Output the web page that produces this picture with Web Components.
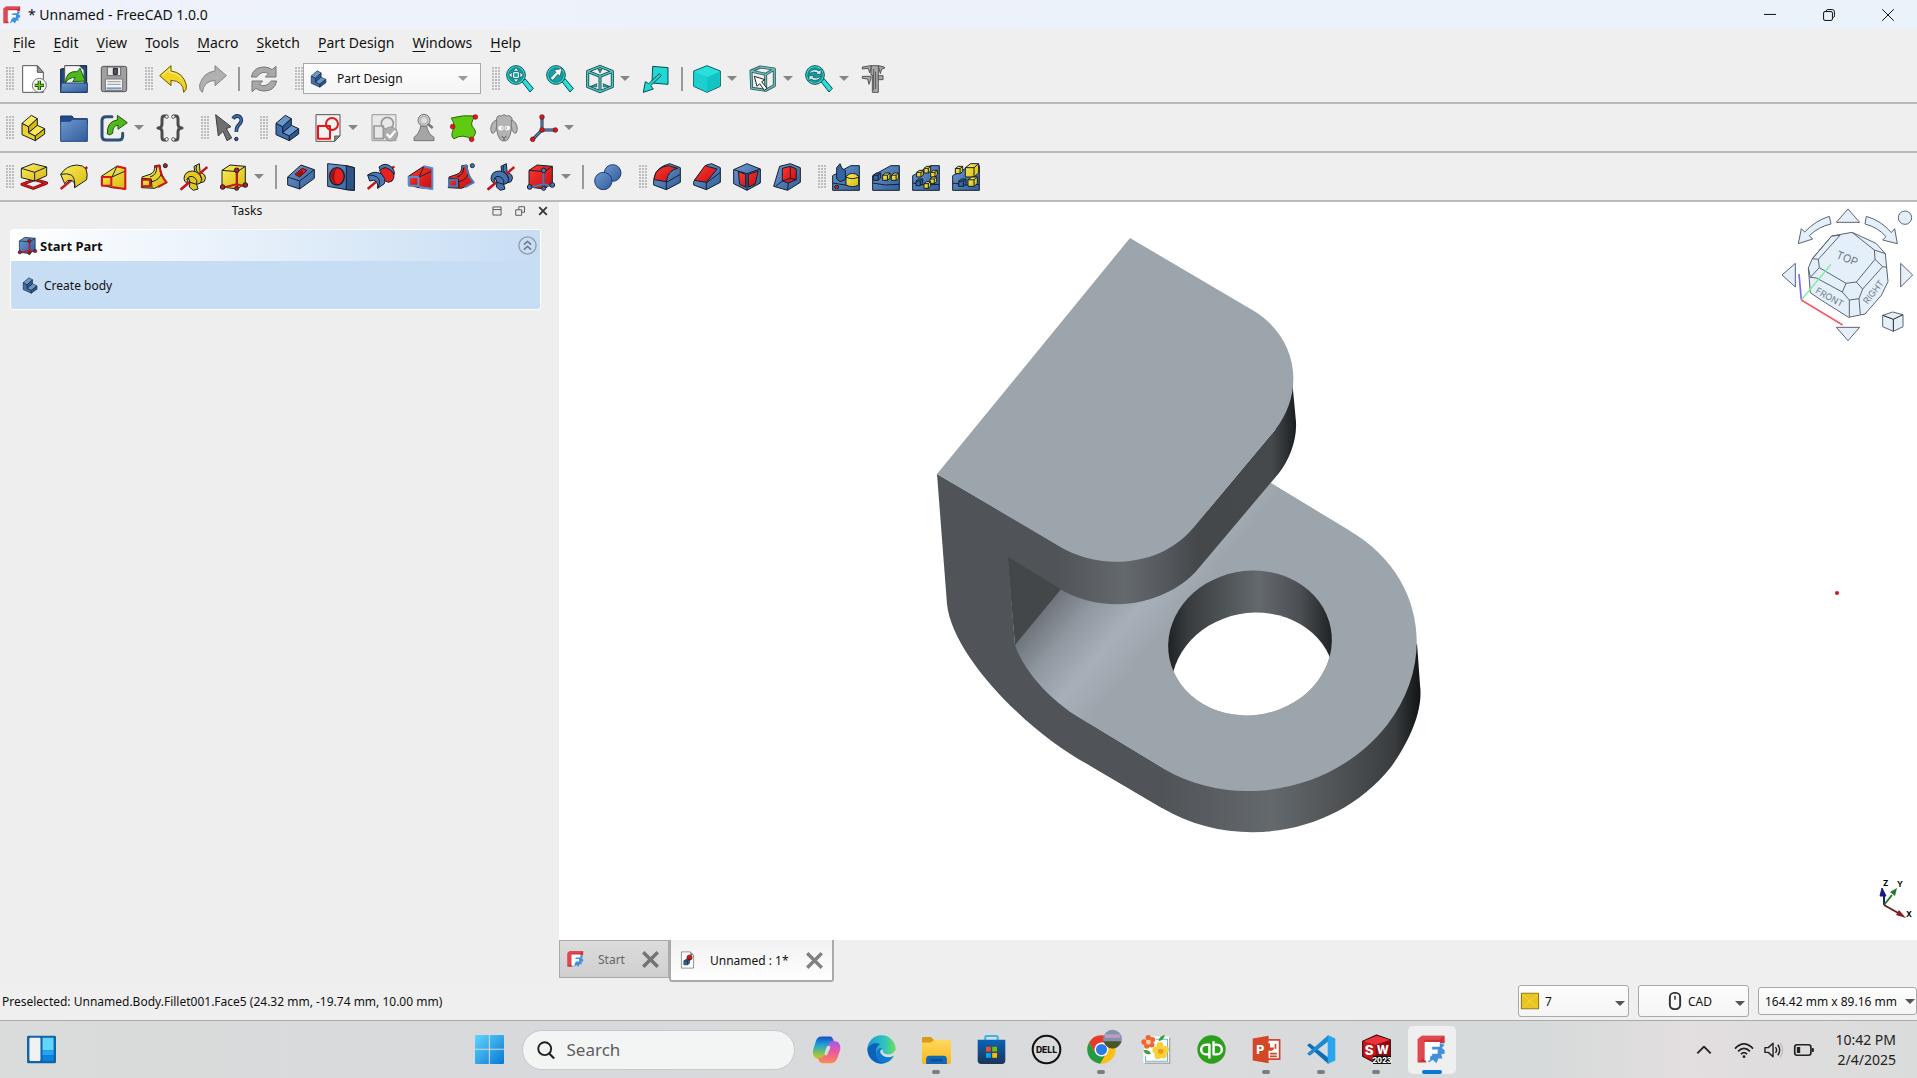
<!DOCTYPE html>
<html lang="en">
<head>
<meta charset="utf-8">
<title>* Unnamed - FreeCAD 1.0.0</title>
<style>
  html, body { height: 100%; margin: 0; }
  body {
    font-family: "Noto Sans", "Open Sans", sans-serif;
    font-size: 12px;
    color: #111;
    background: #efefef;
    overflow: hidden;
  }
</style>
</head>
<body>
<cad-app></cad-app>

<script>
// Every icon is drawn on an 84 x 84 grid
const STEP = (top, front, side) => `
  <path fill="${front}" d="M6 28 26 38V56L46 66V80L6 62z"/>
  <path fill="${top}" d="M6 28 34 4 52 14 26 38z"/>
  <path fill="${side}" d="M26 38 52 14V34L26 56z"/>
  <path fill="${top}" d="M26 56 52 34 74 44 46 66z"/>
  <path fill="${side}" d="M46 66 74 44V60L46 80z"/>`;

const PATTERN_BASE = '<path fill="url(#b)" d="M2 82V38L56 8 82 8V82z"/><path fill="none" d="M2 60 40 66 82 64"/>';
const cube = (x, y, s, fill) => `
  <path fill="${fill}" d="M${x} ${y + s * 0.3}L${x + s * 0.4} ${y}H${x + s}V${y + s * 0.7}L${x + s * 0.65} ${y + s}H${x}z"/>
  <path fill="none" d="M${x} ${y + s * 0.3}H${x + s * 0.65}V${y + s}M${x + s * 0.65} ${y + s * 0.3}L${x + s} ${y}"/>`;

const LENS = `
  <path d="M48 50 58 42 82 70 72 81z" fill="#2adfdc" stroke="#0b4a4d"/>
  <circle cx="30" cy="30" r="28" fill="#2fe0dc" stroke="#0b4a4d"/>
  <circle cx="30" cy="30" r="22" fill="#169fa4" stroke="#0b6b6e" stroke-width="2"/>`;

const wedge = (a, e) => `
  <path fill="${a}" d="M4 40 50 10 76 16 76 78 36 74 4 66z"/>
  <path fill="none" stroke="#222" d="M36 42 50 12M36 42 76 24"/>
  <path fill="none" stroke="${e}" stroke-width="6" d="M50 10 76 16V78L36 72"/>
  <rect x="6" y="42" width="28" height="26" fill="${a}" stroke="${e}" stroke-width="6"/>`;

const sweep = (a, e) => `
  <path fill="${a}" d="M6 42 30 34Q46 28 44 8L60 6Q62 38 80 58L44 76 4 74z"/>
  <path fill="none" d="M30 42Q52 36 50 10M36 56Q60 50 64 30M36 74 34 48 6 46"/>
  <path fill="none" stroke="${e}" stroke-width="6" d="M44 12 58 8Q62 40 80 58L54 72"/>
  <rect x="6" y="50" width="24" height="20" fill="${a}" stroke="${e}" stroke-width="6"/>
  <circle cx="76" cy="8" r="6" fill="${e}"/>`;

// Coil around a slanted axis: back loop, axis, then front loop
const helix = (a) => `
  <path fill="${a}" d="M42 10 58 2 60 26 74 36Q80 46 72 56L54 62 46 40z"/>
  <path fill="none" d="M50 8Q44 24 60 34L66 50"/>
  <path stroke="#c4181b" stroke-width="7" d="M2 80 82 12"/>
  <path fill="${a}" d="M12 46Q14 24 38 24 58 26 64 46 66 62 50 64L54 78 40 82 28 72 30 58 26 46 20 60Q12 56 12 46z"/>
  <path fill="none" d="M20 50Q28 34 44 44 54 52 50 64M30 58 50 64"/>
  <path stroke="#c4181b" stroke-width="7" d="M2 80 24 61"/>`;

const primitive = (a, e) => `
  <path fill="${a}" d="M6 22 30 6 76 10 76 60 52 78 6 72z"/>
  <path fill="none" d="M6 22 52 26 76 10M52 26V78"/>
  <path fill="none" stroke="${e}" stroke-width="6" d="M50 24V64L8 74M50 64 74 70"/>
  <g fill="${e}"><circle cx="50" cy="22" r="7"/><circle cx="8" cy="72" r="7"/><circle cx="76" cy="66" r="7"/><circle cx="50" cy="76" r="6"/></g>`;

const FREECAD = `
  <g stroke="none"><path fill="#cb333b" d="M2 12 14 2H80V24H26V80H2z"/><path fill="#f0555d" d="M14 2H80L66 14H20V66L2 80V12z" opacity=".6"/>
  <path fill="#418fde" d="M44 30 66 24 80 28 72 38 80 44 80 54 70 56 74 68 62 68 56 82 46 72 34 80 30 66 44 60z"/>
  <path fill="#fff" d="M22 20H66V34H38V42H60V54H38V74H22z"/></g>`;

const ICONS = {
  'freecad': FREECAD,
  'new': `<path fill="#fff" stroke="#555" d="M8 2H52L70 22V82H8z"/><path fill="#999" stroke="#555" d="M52 2V22H70z"/>
    <circle cx="58" cy="61" r="21" fill="#f4f4f4" stroke="#777"/><path stroke="#274d0c" stroke-width="10" d="M58 47V75M44 61H72"/><path stroke="#73d216" stroke-width="4" d="M58 48V74M45 61H71"/>`,
  'open': `<path fill="#204a87" stroke="#0b1d38" d="M2 12 18 10V2H80V82H2z"/><path fill="#f6f6f6" stroke="#555" d="M14 2H58L72 16V60H14z"/>
    <path fill="url(#b)" stroke="#1d3f73" d="M4 54H82V82H2z"/><path fill="#4fb81c" stroke="#1f5a08" d="M16 54Q18 16 52 20L60 10 76 48 38 50 46 38Q28 36 16 54z"/>`,
  'save': `<rect x="4" y="4" width="76" height="76" rx="6" fill="#a0a0a0" stroke="#555"/><rect x="22" y="6" width="40" height="26" fill="#e6e6e6" stroke="#666"/>
    <rect x="40" y="10" width="12" height="18" fill="#555"/><rect x="16" y="42" width="52" height="34" fill="#f2f2f2" stroke="#777"/><path stroke="#999" d="M22 50H62M22 58H62"/><path stroke="#7d9bc0" stroke-width="6" d="M20 70H64"/>`,
  'undo': `<path fill="#f2d524" stroke="#6b5800" d="M2 32 36 2V18Q72 22 82 60 84 76 74 82 74 48 36 46V62z"/><path fill="none" stroke="#fbf09c" d="M10 32 32 12V22Q56 24 68 42"/>`,
  'redo': `<path fill="#b1b1b1" stroke="#848484" d="M82 32 48 2V18Q12 22 2 60 0 76 10 82 14 48 48 46V62z"/>`,
  'refresh': `<path fill="#a8a8a8" stroke="#777" d="M4 36Q10 6 42 6 58 6 66 14L78 4V36H46L56 26Q38 14 20 36z"/><path fill="#a8a8a8" stroke="#777" d="M80 48Q74 78 42 78 26 78 18 70L6 80V48H38L28 58Q46 70 64 48z"/>`,
  'body': STEP('#6b97cf', '#3f6fae', '#2c5894'),
  'part': STEP('#fbe85a', '#edd22c', '#d6b90c'),
  'fit': LENS + `<path fill="#fff" stroke="#0b4a4d" stroke-width="2" d="M30 8 39 18H21zM30 52 39 42H21zM8 30 18 21V39zM52 30 42 21V39z"/><path fill="none" stroke="#fff" stroke-width="3" d="M23 23H37V37H23z"/>`,
  'fit-sel': LENS + `<path fill="#fff" stroke="#0b4a4d" stroke-width="2" d="M48 10 42 34 36 28 20 46 13 39 30 22 24 16z"/>`,
  'sync': LENS + `<path fill="#cfeeee" stroke="#0b4a4d" stroke-width="2" d="M12 26Q18 12 34 14L42 18 48 12V28H32L36 23Q26 18 12 26zM48 34Q42 48 26 46L18 42 12 48V32H28L24 37Q34 42 48 34z"/>`,
  'iso': `<path fill="none" stroke="#0b4a4d" stroke-width="9" d="M42 4 79 19V65L42 80 5 65V19zM5 19 42 34 79 19M42 34V80"/><path fill="none" stroke="#54c8c4" stroke-width="4" d="M42 4 79 19V65L42 80 5 65V19zM5 19 42 34 79 19M42 34V80"/>
    <path fill="#2a9a98" stroke="#0b4a4d" stroke-width="2" d="M14 64 32 56V66zM70 64 52 56V66zM36 12H48L42 24z"/>`,
  'view-sel': `<path fill="#20d8d6" stroke="#0b4a4d" d="M32 4 78 8V58L30 54z"/><path fill="#20d8d6" stroke="#0b4a4d" d="M52 26 58 32 26 62 34 72 4 82 10 50 20 56z"/>`,
  'draw-style': `<path fill="#27e0dc" stroke="#0b5d61" d="M42 2 82 18V64L42 82 2 64V18z"/><path fill="#12c4c4" stroke="none" d="M42 36 80 20V63L42 80z"/><path fill="#1bd0cf" stroke="none" d="M42 36 4 20V63L42 80z"/>`,
  'select-mode': `<path fill="none" stroke="#2d5d5f" stroke-width="9" d="M6 18 34 6 76 12V62L50 76 8 70zM6 18 50 28 76 12M50 28V74"/><path fill="none" stroke="#6fb9b5" stroke-width="4" d="M6 18 34 6 76 12V62L50 76 8 70zM6 18 50 28 76 12M50 28V74"/>
    <path fill="#fff" stroke="#222" d="M16 34 48 44 38 50 54 70 46 76 32 56 24 64z"/>`,
  'measure': `<g fill="#aaa" stroke="#555"><path d="M30 2H52V82H34V30H30z"/><path d="M4 6 30 2V10L26 24 22 10 4 12zM4 34H30V40L24 58 20 42 4 40zM52 2 58 26 62 12 70 10V6zM52 32H66V44H52z"/><path d="M38 12V76M44 20V72"/></g>`,
  'group': `<path fill="#204a87" stroke="#173664" d="M2 6H36L42 14H82V30H2z"/><path fill="url(#b)" stroke="#204a87" d="M2 22H30L38 16H82V82H2z"/>`,
  'link': `<path fill="none" stroke="#2f4e78" stroke-width="9" stroke-linecap="round" d="M36 8H18Q6 8 6 20V66Q6 78 18 78H56Q68 78 68 66V58"/><path fill="#4fb81c" stroke="#1f5a08" d="M22 60Q20 22 52 18V4L82 26 54 46V34Q38 34 38 58 28 66 22 60z"/>`,
  'varset': `<g fill="none" stroke="#4a4d50" stroke-width="9"><path d="M32 6H24Q18 6 18 16V30Q18 42 6 42 18 42 18 54V68Q18 78 24 78H32"/><path d="M52 6H60Q66 6 66 16V30Q66 42 78 42 66 42 66 54V68Q66 78 60 78H52"/></g><g fill="#fff" stroke="#4a4d50"><circle cx="32" cy="8" r="5"/><circle cx="32" cy="76" r="5"/><circle cx="52" cy="8" r="5"/><circle cx="52" cy="76" r="5"/></g>`,
  'whatsthis': `<path fill="#6d6f71" stroke="#3d3f41" d="M2 2 48 38 34 44 50 72 36 80 24 52 10 66z"/><path fill="none" stroke="#1c3763" stroke-width="11" d="M54 14Q62 2 74 8 86 20 70 34 64 40 64 54"/><path fill="none" stroke="#4a78b5" stroke-width="4" d="M54 14Q62 2 74 8 86 20 70 34 64 40 64 54"/><circle cx="64" cy="75" r="5" fill="#3465a4"/>`,
  'sketch': `<path fill="#f2f4f2" stroke="#555" d="M6 2H78V66L62 82H6z"/><path fill="#8a9486" stroke="#555" d="M78 66H62V82z"/><g fill="none" stroke="#e8171b" stroke-width="6"><path d="M12 36H48V74H12z"/><circle cx="54" cy="30" r="18"/></g>`,
  'validate': `<path fill="#e8e8e8" stroke="#999" d="M6 2H78V80H6z"/><g fill="none" stroke="#999" stroke-width="5"><path d="M12 36H40V74H12z"/><circle cx="52" cy="28" r="18"/></g><circle cx="62" cy="60" r="21" fill="#aeaeae" stroke="#999"/><path fill="none" stroke="#fff" stroke-width="7" d="M50 60 60 70 76 50"/>`,
  'check': `<path fill="#a5a5a5" stroke="#777" d="M12 80V70Q28 60 32 36H50Q54 60 72 70V80z"/><circle cx="42" cy="19" r="18" fill="#c7c7c7" stroke="#777"/><circle cx="42" cy="19" r="11" fill="#ddd" stroke="#999" stroke-width="2"/><path stroke="#777" stroke-width="8" d="M54 30 68 42"/>`,
  'binder': `<path fill="#5ecb12" stroke="#2a6d00" d="M4 12Q40 2 76 6 56 30 72 44 84 56 64 76 40 58 12 74 2 70 8 50 18 36 4 12z"/><g fill="#e8171b" stroke="#7a0a0c" stroke-width="2"><circle cx="76" cy="9" r="7"/><circle cx="8" cy="38" r="7"/><circle cx="65" cy="76" r="7"/></g>`,
  'clone': `<g fill="#b4b4b4" stroke="#777"><path d="M20 14Q22 2 34 6 42 -2 50 6 62 2 66 14 70 30 64 46 62 64 54 76 42 86 30 76 22 64 20 46 14 30 20 14z"/><path d="M20 18Q4 22 2 46 4 60 10 58 20 52 20 36zM64 18Q80 22 82 46 80 60 74 58 64 52 64 36z"/></g><ellipse cx="33" cy="42" rx="8" ry="7" fill="#fff" stroke="none"/><ellipse cx="52" cy="42" rx="8" ry="7" fill="#fff" stroke="none"/><path fill="none" stroke="#555" d="M34 42H38M47 42H51M34 66 42 72 50 66M42 72V80"/>`,
  'datum': `<path fill="none" stroke="#1d2f4f" stroke-width="9" d="M36 8V48H76M36 48 8 76"/><path fill="none" stroke="#5b82b8" stroke-width="4" d="M36 8V48H76M36 48 8 76"/><g fill="#d8171b" stroke="#6d0b0d" stroke-width="2"><circle cx="36" cy="9" r="7"/><circle cx="36" cy="48" r="7"/><circle cx="76" cy="48" r="7"/><circle cx="8" cy="76" r="7"/></g>`,
  'pad': `<path fill="none" stroke="#6d0b0d" stroke-width="9" d="M6 64 44 50 80 60 40 76z"/><path fill="none" stroke="#d8171b" stroke-width="5" d="M6 64 44 50 80 60 40 76z"/><path fill="url(#y)" d="M4 16 40 2 80 12V38L44 54 4 44z"/><path fill="none" d="M4 16 44 28 80 12M44 28V54"/>`,
  'revolution': `<path stroke="#c4181b" stroke-width="7" d="M2 78 82 12"/><path fill="url(#y)" d="M2 34Q18 8 50 6 70 6 78 18 84 34 80 50L44 74Q46 56 34 52 22 48 14 62z"/><path fill="none" d="M2 34Q22 30 34 36 46 44 44 74"/>`,
  'loft': wedge('url(#y)', '#d8171b'),
  'pipe': sweep('url(#y)', '#c4181b'),
  'helix': helix('#e3c822'),
  'primitive': primitive('url(#y)', '#c4181b'),
  'pocket': `<path fill="url(#b)" d="M2 42 42 6 82 20V46L38 78 2 66z"/><path fill="none" d="M2 42 38 54 82 20M38 54V78"/><path fill="#e8201f" stroke="#5a0a0a" d="M24 34 46 16 60 22 38 42z"/><path fill="#9a1012" stroke="none" d="M28 34 46 20 48 32 38 40z"/>`,
  'hole': `<path fill="url(#b)" d="M2 2 58 8 82 14V82L58 80 2 70z"/><path fill="#2d5489" d="M58 8 82 14V82L58 80z"/><ellipse cx="30" cy="40" rx="22" ry="26" fill="#e8201f" stroke-width="4"/><path fill="#8e1113" stroke="none" d="M30 16Q14 22 12 40 16 62 32 64 20 54 22 38 24 22 30 16z"/>`,
  'groove': `<path stroke="#c4181b" stroke-width="7" d="M2 78 82 10"/><path fill="#e8201f" d="M38 22Q52 8 66 16 84 26 80 46 78 56 64 58L52 52z"/><path fill="#4a78b5" d="M36 12Q54 -4 74 12 84 24 82 34 72 18 56 14 44 14 40 22z"/><path fill="#4a78b5" d="M2 36Q22 22 42 32 58 46 52 62L32 76Q34 54 20 52L8 54z"/><path fill="none" d="M2 36Q26 36 34 46 42 56 32 76"/>`,
  'sub-loft': wedge('url(#r)', '#5b8ccc'),
  'sub-pipe': sweep('url(#r)', '#4a78b5'),
  'sub-helix': helix('#4674b2'),
  'sub-primitive': primitive('url(#r)', '#4a78b5'),
  'boolean': `<circle cx="56" cy="30" r="25" fill="url(#b)" stroke="#1d3f73"/><circle cx="28" cy="54" r="26" fill="url(#b)" stroke="#1d3f73"/>`,
  'fillet': `<path fill="url(#b)" d="M2 54 4 42Q10 12 50 2L82 14V58L40 80 2 66z"/><path fill="url(#r)" d="M4 44Q8 14 46 8L74 16Q44 22 40 56L4 50z"/><path fill="none" d="M40 56V80M40 58 82 34"/>`,
  'chamfer': `<path fill="url(#b)" d="M2 56 40 6 56 2 82 14V58L40 80 2 66z"/><path fill="url(#r)" d="M4 52 36 8 72 18 40 58z"/><path fill="none" d="M40 58V80M40 60 82 28"/>`,
  'draft': `<path fill="url(#b)" d="M2 20 42 2 82 18V60L42 82 2 62z"/><path fill="url(#r)" d="M16 26 38 34V72L20 64zM46 34 76 24 66 64 46 72z"/><path fill="none" d="M2 20 42 32 82 18M42 32V82"/>`,
  'thickness': `<path fill="url(#b)" d="M20 10 52 2 82 14V58L44 82 2 70z"/><path fill="url(#r)" d="M28 16 52 10 70 18V50L46 60 28 54z"/><path fill="none" d="M28 54 8 70M52 10V46L70 50M52 46 28 54M46 60 44 80"/>`,
  'mirror': PATTERN_BASE + `<path fill="#3465a4" d="M14 14 24 2 30 16 40 22V50L24 56 14 48z"/><path fill="url(#y)" d="M42 40Q62 22 80 40V66Q62 76 42 66z"/><path fill="none" d="M42 42Q62 52 80 42"/><ellipse cx="14" cy="72" rx="6" ry="5" fill="#e8201f"/>`,
  'linear': PATTERN_BASE + cube(4, 30, 22, '#3465a4') + cube(32, 30, 22, 'url(#y)') + cube(58, 30, 22, 'url(#y)'),
  'polar': PATTERN_BASE + cube(14, 22, 20, 'url(#y)') + cube(36, 10, 20, 'url(#y)') + cube(56, 22, 20, 'url(#y)') + cube(54, 42, 20, 'url(#y)') + cube(36, 56, 20, 'url(#y)') + cube(12, 48, 20, '#3465a4'),
  'multi': PATTERN_BASE + cube(40, 2, 40, 'url(#y)') + cube(10, 10, 22, 'url(#y)') + cube(48, 42, 28, 'url(#y)') + cube(20, 48, 22, '#3465a4'),
  'document': `<path fill="#fff" stroke="#555" d="M12 2H56L72 18V82H12z"/><path fill="#777" stroke="none" d="M56 2V18H72z"/><circle cx="52" cy="30" r="13" fill="#d8171b" stroke="#5a0a0a"/>` + cube(24, 38, 28, '#3465a4'),
  'start-part': primitive('url(#b)', '#c4181b'),
  'float': `<path fill="none" stroke="#555" stroke-width="8" d="M8 8H76V76H8zM8 30H76"/>`,
  'restore': `<path fill="none" stroke="#555" stroke-width="8" d="M32 32V6H80V52H56M6 32H56V78H6z"/>`,
  'cross': `<path fill="none" stroke="#333" stroke-width="15" d="M10 10 74 74M74 10 10 74"/>`,
  'collapse': `<circle cx="42" cy="42" r="38" fill="none" stroke="#8c9cab" stroke-width="6"/><path fill="none" stroke="#6d7b88" stroke-width="7" d="M26 38 42 24 58 38M26 60 42 46 58 60"/>`,
  'minimize': `<path stroke="#111" stroke-width="7" d="M0 38H84"/>`,
  'maximize': `<path fill="none" stroke="#111" stroke-width="7" d="M22 14Q24 4 34 4H64Q80 4 80 20V48Q80 58 72 60M12 18H56Q66 18 66 28V70Q66 80 56 80H14Q4 80 4 70V28Q4 18 14 18"/>`,
  'close': `<path stroke="#111" stroke-width="7" d="M2 2 82 82M82 2 2 82"/>`,
  'mouse': `<rect x="18" y="4" width="48" height="76" rx="20" fill="none" stroke="#333" stroke-width="9"/><path stroke="#333" stroke-width="7" d="M42 18V36"/>`,
  'chevron': `<path fill="none" stroke="#222" stroke-width="8" d="M14 56 42 28 70 56"/>`,
  'wifi': `<g fill="none" stroke="#222" stroke-width="7"><path d="M4 36Q42 -4 80 36M17 48Q42 22 67 48M29 60Q42 46 55 60"/></g><circle cx="42" cy="70" r="6" fill="#222" stroke="none"/>`,
  'volume': `<path fill="none" stroke="#222" stroke-width="6" d="M4 32H18L38 14V70L18 52H4zM48 30Q58 42 48 54M58 20Q74 42 58 64"/><path fill="none" stroke="#bbb" stroke-width="5" d="M68 12Q88 42 68 72"/>`,
  'battery': `<rect x="3" y="20" width="68" height="44" rx="10" fill="none" stroke="#222" stroke-width="7"/><path fill="#222" stroke="none" d="M12 29H26V55H12zM75 34H80Q84 34 84 42 84 50 80 50H75z"/>`,
  'search': `<circle cx="36" cy="36" r="30" fill="none" stroke="#222" stroke-width="9"/><path stroke="#222" stroke-width="10" d="M57 58 80 82"/>`,
  'widgets': `<g stroke="none"><rect x="0" y="2" width="84" height="80" rx="4" fill="#1264a8"/><rect x="7" y="8" width="32" height="67" rx="3" fill="#f1f1f4"/><path fill="#63d4fb" d="M45 8H77V44H45z"/><path fill="#22a6f3" d="M45 44H77V59H45z"/><path fill="#0d83e0" d="M45 59H77V75H45z"/></g>`,
  'windows': `<g stroke="none" fill="url(#win)"><path d="M0 3Q0 0 3 0H40V40H0zM43 0H81Q84 0 84 3V40H43zM0 43H40V84H3Q0 84 0 81zM43 43H84V81Q84 84 81 84H43z"/></g>`,
  'copilot': `<g stroke="none"><path fill="url(#cp1)" d="M28 4H54Q60 6 64 20 52 20 48 32L36 66Q30 76 14 68 -2 60 4 40L12 16Q16 4 28 4z"/><path fill="url(#cp2)" d="M58 18H68Q84 20 82 42L74 66Q68 82 54 82H30Q20 80 18 66 32 70 38 54L48 28Q50 18 58 18z"/><path fill="#dadbdc" d="M40 42Q44 28 50 32 56 34 50 44L44 58Q38 62 36 54z"/></g>`,
  'edge': `<g stroke="none"><circle cx="42" cy="42" r="41" fill="url(#e1)"/><path fill="#0c62b8" d="M2 38Q14 18 38 26 24 34 26 54 34 78 60 76 38 92 14 72 0 58 2 38z"/><path fill="#0f78d4" d="M26 54Q30 34 44 38 34 46 44 58 58 68 78 58 66 84 40 80 26 72 26 54z"/><path fill="#dadbdc" d="M42 42Q48 44 46 50 54 60 72 54L84 44V60L78 60Q58 70 44 58 34 48 42 42z"/></g>`,
  'explorer': `<g stroke="none"><path fill="#d99a15" d="M0 10Q0 6 4 6H26L36 16V32H0z"/><path fill="url(#fold)" d="M0 22H26L36 14H80Q84 14 84 18V80Q84 84 80 84H4Q0 84 0 80z"/><path fill="#1266b3" d="M12 84V70Q12 60 22 60H62Q72 60 72 70V84z"/><path fill="#0a4d91" d="M26 70H58V76H26z"/></g>`,
  'store': `<path fill="none" stroke="#39b7ea" stroke-width="6" d="M24 16V6Q24 3 27 3H57Q60 3 60 6V16"/><g stroke="none"><path fill="url(#st)" d="M2 14H82V74Q82 84 72 84H12Q2 84 2 74z"/><path fill="#f25022" d="M26 34H40V48H26z"/><path fill="#7fba00" d="M44 34H58V48H44z"/><path fill="#00a4ef" d="M26 52H40V66H26z"/><path fill="#ffb900" d="M44 52H58V66H44z"/></g>`,
  'dell': `<circle cx="42" cy="42" r="40" fill="none" stroke="#111" stroke-width="6"/><text x="42" y="51" text-anchor="middle" font-family="Inter, sans-serif" font-weight="800" font-size="25" fill="#111" stroke="none">DELL</text>`,
  'chrome': `<g stroke="none"><circle cx="42" cy="42" r="41" fill="#fbc116"/><path fill="#e33b2e" d="M6 22A41 41 0 0 1 78 22H42L24 52z"/><path fill="#249a45" d="M6 22A41 41 0 0 0 38 83L56 52 42 60 24 52z"/><circle cx="42" cy="42" r="20" fill="#fff"/><circle cx="42" cy="42" r="16" fill="#2c7be5"/><g transform="translate(48 -16)"><circle cx="26" cy="28" r="27" fill="#7d93b0"/><path fill="#c49bb9" d="M4 14H48V24H4z"/><path fill="#4f5426" d="M0 34H52Q44 54 26 55 8 54 0 34z"/></g></g>`,
  'flowers': `<g stroke="none"><path fill="#aaa" d="M14 8H82V84H8z"/><path fill="#fff" d="M10 4H78V80H4V50z"/><path fill="none" stroke="#6db6c9" d="M10 60V76H74V12H40"/><g fill="#f0662f"><circle cx="18" cy="8" r="8"/><circle cx="30" cy="14" r="8"/><circle cx="28" cy="28" r="8"/><circle cx="14" cy="32" r="8"/><circle cx="6" cy="20" r="8"/></g><circle cx="19" cy="21" r="7" fill="#f9c9a0"/><g fill="#f9cf3a"><circle cx="52" cy="30" r="10"/><circle cx="68" cy="42" r="10"/><circle cx="62" cy="58" r="10"/><circle cx="46" cy="60" r="10"/><circle cx="40" cy="44" r="10"/></g><circle cx="54" cy="47" r="8" fill="#ee9d12"/><path fill="#3aa13c" d="M48 18Q50 2 66 0 64 16 48 18zM4 44Q20 40 26 54 10 60 4 44z"/></g>`,
  'quickbooks': `<circle cx="42" cy="42" r="41" fill="#2ca01c" stroke="none"/><g fill="none" stroke="#fff" stroke-width="7"><path d="M34 56H26A14 14 0 0 1 26 28H36V68"/><path d="M50 28H58A14 14 0 0 1 58 56H48V18"/></g>`,
  'powerpoint': `<g stroke="none"><path fill="#fff" stroke="#d24726" stroke-width="5" d="M40 14H80V70H40z"/><path fill="#d24726" d="M2 10 48 2V82L2 74z"/><path fill="#d24726" d="M52 24A11 11 0 1 0 64 36H52z"/><path stroke="#d24726" stroke-width="5" d="M52 54H72M52 62H72M68 26V40"/><text x="24" y="54" text-anchor="middle" font-family="Inter, sans-serif" font-weight="800" font-size="36" fill="#fff">P</text></g>`,
  'vscode': `<g stroke="none"><path fill="#0b6fb8" d="M0 30 8 24 62 66V84z"/><path fill="#1b8ad2" d="M0 54 8 60 62 18V0z"/><path fill="#2ba5ee" d="M60 0 82 10V74L60 84z"/></g>`,
  'solidworks': `<g stroke="none"><path fill="#c9141a" stroke="#2a0305" d="M2 18 42 0 82 14V66L40 82 2 62z"/><path fill="#e8343a" d="M4 18 42 2 80 14 40 28z"/><path fill="#8e0c12" d="M40 28 81 15V66L40 80z"/><g font-family="Inter, sans-serif" font-weight="800"><text x="21" y="58" text-anchor="middle" font-size="39" fill="#fff">S</text><text x="60" y="56" text-anchor="middle" font-size="33" fill="#fff">W</text><path fill="#111" d="M32 60H84V84H32z"/><text x="58" y="80" text-anchor="middle" font-size="21" fill="#fff">2023</text></g></g>`,
  'layer': `<rect x="2" y="6" width="80" height="72" fill="#e8c520" stroke="#8f7c1b" stroke-width="5"/><path fill="none" stroke="#f7df57" d="M8 12 40 42 76 12M40 42 12 72M40 42 74 70"/>`
};

const DEFS = `
  <linearGradient id="y" x2="1" y2="1"><stop stop-color="#fdee5e"/><stop offset="1" stop-color="#d6b90c"/></linearGradient>
  <linearGradient id="b" x2="1" y2="1"><stop stop-color="#7099cf"/><stop offset="1" stop-color="#305d9b"/></linearGradient>
  <linearGradient id="r" x2="1" y2="1"><stop stop-color="#fb3a33"/><stop offset="1" stop-color="#c90c10"/></linearGradient>
  <linearGradient id="win" x2="1" y2="1"><stop stop-color="#5fd6fb"/><stop offset="1" stop-color="#0878d4"/></linearGradient>
  <linearGradient id="cp1" x2="0" y2="1"><stop stop-color="#1b4bc0"/><stop offset=".35" stop-color="#1ba0dc"/><stop offset=".7" stop-color="#7cc25c"/><stop offset="1" stop-color="#e3c11d"/></linearGradient>
  <linearGradient id="cp2" x2="0" y2="1"><stop stop-color="#a259e8"/><stop offset=".5" stop-color="#ee5aa0"/><stop offset="1" stop-color="#fb8b50"/></linearGradient>
  <linearGradient id="e1" x2="1" y2="0"><stop stop-color="#1a9ad8"/><stop offset=".6" stop-color="#2fc3c0"/><stop offset="1" stop-color="#6be05a"/></linearGradient>
  <linearGradient id="fold" x2="0" y2="1"><stop stop-color="#ffd95e"/><stop offset="1" stop-color="#f7b71d"/></linearGradient>
  <linearGradient id="st" x2="0" y2="1"><stop stop-color="#0a63b8"/><stop offset="1" stop-color="#1c3457"/></linearGradient>`;

/**
 * Attaches an open shadow root filled with the given markup
 * @param {HTMLElement} host - Element that receives the root
 * @param {string} html - Styles and markup
 */
function render(host, html) {
  const template = document.createElement('template');
  template.innerHTML = html;
  host.attachShadow({ mode: 'open' }).appendChild(template.content.cloneNode(true));
}

class CadIcon extends HTMLElement {
  constructor() {
    super();
    render(this, `
      <style>
        :host { display: block; flex: none; width: 28px; height: 28px; }
        svg { display: block; width: 100%; height: 100%; overflow: visible; }
      </style>
      <svg viewBox="0 0 84 84" stroke="#14202c" stroke-width="3" stroke-linejoin="round" aria-hidden="true">
        <defs>${DEFS}</defs>${ICONS[this.getAttribute('name')]}
      </svg>
    `);
  }
}

class TitleBar extends HTMLElement {
  constructor() {
    super();
    render(this, `
      <style>
        :host { display: flex; align-items: center; height: 29px; padding-left: 3px; background: linear-gradient(90deg, #eff2fa, #eaf2fa); }
        cad-icon { width: 18px; height: 20px; }
        h1 { flex: 1; margin: 0 0 0 7px; font: 14px "Noto Sans", sans-serif; }
        button { display: flex; justify-content: center; align-items: center; width: 59px; height: 29px; padding: 0; border: 0; background: none; }
        button cad-icon { width: 12px; height: 12px; }
      </style>
      <cad-icon name="freecad"></cad-icon>
      <h1><slot></slot></h1>
      <button aria-label="Minimize"><cad-icon name="minimize"></cad-icon></button>
      <button aria-label="Restore"><cad-icon name="maximize"></cad-icon></button>
      <button aria-label="Close"><cad-icon name="close"></cad-icon></button>
    `);
  }
}

class MenuBar extends HTMLElement {
  constructor() {
    super();
    const items = this.getAttribute('items').split(',');
    render(this, `
      <style>
        :host { display: block; height: 26px; }
        nav { display: flex; padding-left: 4px; }
        button { height: 26px; padding: 0 9px; border: 0; background: none; color: inherit; font: 14px "Noto Sans", sans-serif; }
        u { text-underline-offset: 3px; }
      </style>
      <nav>${items.map((item) => `<button><u>${item[0]}</u>${item.slice(1)}</button>`).join('')}</nav>
    `);
  }
}

class ToolBar extends HTMLElement {
  constructor() {
    super();
    render(this, `
      <style>
        :host { display: flex; align-items: center; height: 49px; box-sizing: border-box; border-bottom: 2px solid #bababa; }
      </style>
      <slot></slot>
    `);
  }
}

// Dotted grip that starts each group of tools
class ToolGrip extends HTMLElement {
  constructor() {
    super();
    render(this, `
      <style>
        :host { display: flex; justify-content: flex-end; flex: none; width: 19px; }
        :host([first]) { width: 14px; }
        i { width: 8px; height: 23px; background: radial-gradient(circle at 1px 1px, #bdbdbd 1px, transparent 1px) 0 0 / 3px 3px; }
      </style>
      <i></i>
    `);
  }
}

class ToolSeparator extends HTMLElement {
  constructor() {
    super();
    render(this, `
      <style>
        :host { display: block; flex: none; width: 2px; height: 24px; margin: 0 4px 0 5px; background: #999; }
      </style>
    `);
  }
}

class ToolButton extends HTMLElement {
  constructor() {
    super();
    const icon = this.getAttribute('icon');
    render(this, `
      <style>
        :host { display: flex; flex: none; }
        button { display: flex; align-items: center; height: 40px; padding: 0 6px; border: 0; background: none; }
        .more { width: 16px; padding: 0; }
        .more::before { content: ""; border: 5px solid transparent; border-top-color: #868686; border-bottom: 0; }
      </style>
      <button aria-label="${icon}"><cad-icon name="${icon}"></cad-icon></button>
      ${this.hasAttribute('more') ? `<button class="more" aria-label="${icon} options"></button>` : ''}
    `);
  }
}

// Drop-down with an optional icon in front of its value
class ComboBox extends HTMLElement {
  constructor() {
    super();
    const icon = this.getAttribute('icon');
    render(this, `
      <style>
        :host { display: block; flex: none; box-sizing: border-box; border: 1px solid #a9a9a9; border-radius: 3px; background: linear-gradient(#fdfdfd, #f5f5f5); }
        label { display: flex; align-items: center; height: 100%; }
        cad-icon { width: 18px; height: 18px; margin-left: var(--icon-start, 2px); }
        select { flex: 1; min-width: 0; height: 100%; padding: 0 0 0 var(--text-start, 6px); border: 0; outline: 0; appearance: none; background: none; color: inherit; font: 12px "Noto Sans", sans-serif; }
        i { margin: var(--arrow-margin, 4px 3px 0 0); border: 5px solid transparent; border-top-color: var(--arrow, #555); border-bottom: 0; }
      </style>
      <label>
        ${icon ? `<cad-icon name="${icon}"></cad-icon>` : ''}
        <select aria-label="${this.getAttribute('label')}"><option>${this.getAttribute('value')}</option></select>
        <i></i>
      </label>
    `);
  }
}

class TaskPanel extends HTMLElement {
  constructor() {
    super();
    render(this, `
      <style>
        :host { display: block; background: #eee; }
        header { display: flex; align-items: center; gap: 2px; height: 18px; padding: 0 6px 0 10px; }
        h2 { flex: 1; margin: 0; text-align: center; font-size: 12px; line-height: 18px; font-weight: 400; }
        button { display: flex; align-items: center; border: 0; padding: 0; background: none; color: inherit; font: inherit; }
        header button { justify-content: center; width: 21px; height: 18px; }
        header cad-icon { width: 10px; height: 10px; }
        section { margin: 9px 18px 0 10px; border: 1px solid #fff; border-radius: 3px; background: #c7ddf4; overflow: hidden; }
        .head { display: flex; align-items: center; height: 31px; padding: 0 3px 0 7px; background: linear-gradient(90deg, #fff, #c7ddf4); }
        .head cad-icon { width: 19px; height: 19px; }
        h3 { flex: 1; margin: 0 0 0 3px; font-size: 13px; font-weight: 700; }
        .body { padding: 14px 11px; }
        .body button { gap: 5px; height: 20px; }
        .body cad-icon { width: 17px; height: 19px; }
      </style>
      <header>
        <h2>Tasks</h2>
        <button aria-label="Toggle overlay"><cad-icon name="float"></cad-icon></button>
        <button aria-label="Float"><cad-icon name="restore"></cad-icon></button>
        <button aria-label="Close"><cad-icon name="cross"></cad-icon></button>
      </header>
      <section>
        <div class="head">
          <cad-icon name="start-part"></cad-icon>
          <h3>Start Part</h3>
          <button aria-label="Collapse"><cad-icon name="collapse"></cad-icon></button>
        </div>
        <div class="body"><button><cad-icon name="body"></cad-icon>Create body</button></div>
      </section>
    `);
  }
}

class ModelView extends HTMLElement {
  constructor() {
    super();
    render(this, `
      <style>
        :host { display: block; position: relative; background: #fff; overflow: hidden; }
        svg { display: block; position: absolute; }
        .part { inset: 0; width: 100%; height: 100%; }
        .cube { top: 0; right: 0; width: 177px; height: 158px; }
        .axes { right: 0; bottom: 15px; width: 40px; height: 50px; }
        text { font-family: Inter, "Noto Sans", sans-serif; }
      </style>
      <svg class="part" viewBox="559 202 1358 738" role="img" aria-label="Bracket with a hole">
        <defs>
          <linearGradient id="upper" gradientUnits="userSpaceOnUse" x1="1057" x2="1296">
            <stop stop-color="#505358"/><stop offset=".28" stop-color="#64696d"/><stop offset=".46" stop-color="#54585c"/><stop offset=".59" stop-color="#44484b"/><stop offset=".9" stop-color="#45494c"/><stop offset="1" stop-color="#1b1e20"/>
          </linearGradient>
          <linearGradient id="lower" gradientUnits="userSpaceOnUse" x1="1162" x2="1420">
            <stop stop-color="#505358"/><stop offset=".42" stop-color="#64696d"/><stop offset=".7" stop-color="#4d5154"/><stop offset=".9" stop-color="#393d3f"/><stop offset="1" stop-color="#121415"/>
          </linearGradient>
          <linearGradient id="hole" gradientUnits="userSpaceOnUse" x1="1168" x2="1333">
            <stop stop-color="#1f2224"/><stop offset=".12" stop-color="#383c3f"/><stop offset=".55" stop-color="#64696d"/><stop offset=".8" stop-color="#4b4f53"/><stop offset="1" stop-color="#1f2224"/>
          </linearGradient>
          <linearGradient id="inner" gradientUnits="userSpaceOnUse" x1="1018" y1="643" x2="1098" y2="710">
            <stop stop-color="#70767d"/><stop offset=".3" stop-color="#8f979f"/><stop offset=".66" stop-color="#a7b0b9"/><stop offset="1" stop-color="#9da5ac"/>
          </linearGradient>
          <clipPath id="rim"><circle r="1" transform="matrix(67 39 47 -61 1250 643)"/></clipPath>
        </defs>
        <path fill="url(#lower)" d="M1082 719 1164 769 1387 725 1417 643 1420 685C1424 715 1404 749 1391 767C1339 833 1239 853 1162 808L1089 765z"/>
        <path fill="#9da5ac" d="M1269 482 1350 531C1422 573 1438 659 1387 725C1336 791 1236 811 1164 769L1082 719 1015 645 1058 580z"/>
        <path fill="url(#inner)" d="M1013 645 1060 575 1150 540 1269 482 1350 531 1180 730 1083 724 1020 676z"/>
        <path fill="#43474a" d="M1007 555 1062 582 1062 588 1015 645z"/>
        <g clip-path="url(#rim)">
          <rect x="1160" y="560" width="180" height="170" fill="url(#hole)"/>
          <circle r="1" transform="matrix(67 39 47 -61 1253 685)" fill="#fff"/>
        </g>
        <path fill="#505358" d="M937 474 1057 544 1059 588 1008 557 1015 645C1020 662 1043 697 1083 720L1164 769 1162 808 1089 765C1027 732 952 655 947 604z"/>
        <path fill="url(#upper)" d="M1056 544 1193 528 1275 430 1292 379 1296 422C1297 441 1289 460 1279 473L1198 569C1172 600 1112 620 1058 588z"/>
        <path fill="#9da5ac" d="M1130 238 1254 311C1297 337 1306 391 1275 430L1193 528C1163 565 1102 573 1057 545L937 474z"/>
        <circle cx="1837" cy="593" r="2" fill="#d40f1f"/>
      </svg>

      <svg class="cube" viewBox="0 36 531 474" fill="#e4effa" stroke="#5a6570" stroke-width="3" stroke-linejoin="round" role="img" aria-label="Navigation cube">
        <path d="M324 57 359 97H289zM324 452 289 412H359zM126 255 166 220V291zM518 255 482 220V291z"/>
        <path d="M268 79 273 102Q236 110 208 137L218 147 175 161 184 116 194 126Q226 92 268 79zM379 79 375 102Q414 112 438 140L428 150 472 161 464 116 454 128Q424 92 379 79z"/>
        <circle cx="495" cy="83" r="20"/>
        <path d="M275 138 336 127 408 160 436 191 444 275 424 316 375 372 326 382 240 328 211 308 205 234 217 206z"/>
        <path fill="none" d="M275 138 217 206 235 208 300 136zM235 208 238 233 211 262M205 234 211 262 229 264M238 233 318 280 349 276 405 208 403 180 336 127M229 264 307 306 318 280M349 276 368 297 357 326 328 330 307 306M405 208 428 230 368 297M403 180 436 191M428 230 441 232M328 330V382M357 326 361 374"/>
        <path d="M428 376 458 366 489 374V410L460 424 428 410z"/><path fill="none" stroke="#222" d="M428 376 460 388 489 374M460 388V424"/>
        <path stroke="#7a6cf0" stroke-width="5" d="M177 252 184 330"/><path stroke="#7df08c" stroke-width="4" d="M184 330 273 223"/><path stroke="#f7596b" stroke-width="5" d="M184 330 308 405"/>
        <g fill="#6f7b86" stroke="none" text-anchor="middle">
          <text transform="translate(317 216) rotate(22)" font-size="33">TOP</text>
          <text transform="translate(264 330) rotate(29)" font-size="27">FRONT</text>
          <text transform="translate(408 312) rotate(-52)" font-size="27">RIGHT</text>
        </g>
      </svg>

      <svg class="axes" viewBox="1877 875 40 50" stroke-width="2" role="img" aria-label="Axes">
        <path stroke="#1b1b7e" d="M1884 905V893"/><path fill="#1b1b7e" d="M1882 888 1886 896H1880z" stroke="#1b1b7e" stroke-width="1"/>
        <path stroke="#237a2b" d="M1884 905 1892 895"/><path fill="#237a2b" d="M1897 888 1895 896 1890 892z"/>
        <path stroke="#6f1a1f" d="M1884 905 1900 914"/><path fill="#8a1c22" d="M1906 918 1896 915 1899 910z"/>
        <g font-size="8" font-weight="700" fill="#000"><text x="1883" y="886">Z</text><text x="1897" y="887">Y</text><text x="1906" y="917">X</text></g>
      </svg>
    `);
  }
}

class DocumentTab extends HTMLElement {
  constructor() {
    super();
    render(this, `
      <style>
        :host { display: flex; align-items: center; box-sizing: border-box; height: 38px; padding: 0 8px 0 7px; border: 1px solid #aaa; background: linear-gradient(#dcdcdc, #cfcfcf); color: #666; }
        :host([active]) { height: 42px; padding: 0 8px; border-top: 0; border-width: 0 2px 2px; border-radius: 0 0 3px 3px; background: linear-gradient(#f1f1f1, #fff); color: #111; }
        button { display: flex; align-items: center; border: 0; padding: 0; background: none; color: inherit; font: inherit; }
        .name { gap: 14px; padding-right: 16px; }
        .name cad-icon { width: 17px; height: 20px; }
        .close { opacity: .6; }
        .close cad-icon { width: 19px; height: 19px; }
      </style>
      <button class="name"><cad-icon name="${this.getAttribute('icon')}"></cad-icon><slot></slot></button>
      <button class="close" aria-label="Close tab"><cad-icon name="cross"></cad-icon></button>
    `);
  }
}

class StatusBar extends HTMLElement {
  constructor() {
    super();
    render(this, `
      <style>
        :host { display: flex; align-items: center; box-sizing: border-box; height: 36px; padding: 0 0 3px 2px; gap: 9px; border-bottom: 1px solid #aaa; }
        output { flex: 1; }
        combo-box { width: 111px; height: 32px; }
        .cad { --icon-start: 27px; --text-start: 4px; }
        .size { width: 159px; height: 28px; --arrow-margin: 0 1px 0 0; }
      </style>
      <output><slot></slot></output>
      <combo-box icon="layer" label="Notifications" value="7"></combo-box>
      <combo-box class="cad" icon="mouse" label="Navigation style" value="CAD"></combo-box>
      <combo-box class="size" label="Dimension" value="164.42 mm x 89.16 mm"></combo-box>
    `);
  }
}

class TaskbarApp extends HTMLElement {
  constructor() {
    super();
    render(this, `
      <style>
        :host { display: block; }
        button { display: flex; position: relative; justify-content: center; align-items: center; width: 55px; height: 48px; padding: 0; border: 0; border-radius: 5px; background: none; }
        cad-icon { width: 29px; height: 29px; }
        :host([running]) button::after { content: ""; position: absolute; bottom: 0; width: 8px; height: 4px; border-radius: 2px; background: #7b7d80; }
        :host([current]) button { width: 48px; margin: 0 4px; background: #efefef; }
        :host([current]) button::after { width: 20px; background: #0a78d4; }
      </style>
      <button aria-label="${this.getAttribute('icon')}"><cad-icon name="${this.getAttribute('icon')}"></cad-icon></button>
    `);
  }
}

class TaskBar extends HTMLElement {
  constructor() {
    super();
    render(this, `
      <style>
        :host { display: grid; grid-template-columns: 1fr auto 1fr; align-items: center; height: 57px; background: linear-gradient(90deg, #dadcdb, #d7d9dc 30%, #dadbdc 60%, #d6dada 80%, #e3dedf 88%, #dadcdb); }
        .left { padding-left: 14px; }
        .apps { display: flex; align-items: center; padding-left: 4px; }
        .search { display: flex; align-items: center; gap: 12px; box-sizing: border-box; width: 273px; height: 40px; margin: 0 4px 0 5px; padding: 0 14px; border: 1px solid #c6c8ca; border-radius: 20px; background: #f3f5f5; }
        .search cad-icon { width: 18px; height: 18px; }
        input { flex: 1; min-width: 0; padding: 0; border: 0; outline: 0; background: none; font: 17px "Noto Sans", sans-serif; }
        input::placeholder { color: #5d5d5d; opacity: 1; }
        .tray { display: flex; justify-content: flex-end; align-items: center; gap: 10px; padding-right: 21px; }
        .tray cad-icon { width: 20px; height: 20px; }
        .up { margin-right: 10px; padding: 0; border: 0; background: none; }
        time { margin-left: 11px; text-align: right; font: 14px/20px "Noto Sans", sans-serif; color: #222; }
      </style>
      <div class="left"><taskbar-app icon="widgets"></taskbar-app></div>
      <div class="apps">
        <taskbar-app icon="windows"></taskbar-app>
        <label class="search"><cad-icon name="search"></cad-icon><input type="text" placeholder="Search" aria-label="Search"></label>
        <taskbar-app icon="copilot"></taskbar-app>
        <taskbar-app icon="edge"></taskbar-app>
        <taskbar-app icon="explorer" running></taskbar-app>
        <taskbar-app icon="store"></taskbar-app>
        <taskbar-app icon="dell"></taskbar-app>
        <taskbar-app icon="chrome" running></taskbar-app>
        <taskbar-app icon="flowers"></taskbar-app>
        <taskbar-app icon="quickbooks"></taskbar-app>
        <taskbar-app icon="powerpoint" running></taskbar-app>
        <taskbar-app icon="vscode" running></taskbar-app>
        <taskbar-app icon="solidworks" running></taskbar-app>
        <taskbar-app icon="freecad" running current></taskbar-app>
      </div>
      <div class="tray">
        <button class="up" aria-label="Show hidden icons"><cad-icon name="chevron"></cad-icon></button>
        <cad-icon name="wifi"></cad-icon>
        <cad-icon name="volume"></cad-icon>
        <cad-icon name="battery"></cad-icon>
        <time datetime="2025-02-04T22:42">10:42 PM<br>2/4/2025</time>
      </div>
    `);
  }
}

// Turns a short list into tools: "|" separator, ":" grip, trailing "+" adds a menu arrow
const tools = (list) => list.split(' ').map((name) => {
  if (name === '|') return '<tool-separator></tool-separator>';
  if (name === ':') return '<tool-grip></tool-grip>';
  if (name === 'workbench') return '<combo-box class="workbench" icon="body" label="Workbench" value="Part Design"></combo-box>';
  return `<tool-button icon="${name.replace('+', '')}" ${name.endsWith('+') ? 'more' : ''}></tool-button>`;
}).join('');

class CadApp extends HTMLElement {
  constructor() {
    super();
    render(this, `
      <style>
        :host { display: flex; flex-direction: column; height: 100vh; }
        .workbench { width: 178px; height: 31px; border-radius: 0; --icon-start: 6px; --text-start: 9px; --arrow: #999; --arrow-margin: 0 12px 0 0; }
        main { flex: 1; display: flex; min-height: 0; }
        task-panel { flex: none; width: 559px; }
        .docs { flex: 1; display: flex; flex-direction: column; min-width: 0; }
        model-view { flex: 1; }
        .tabs { display: flex; align-items: flex-start; height: 45px; }
      </style>
      <title-bar>* Unnamed - FreeCAD 1.0.0</title-bar>
      <menu-bar items="File,Edit,View,Tools,Macro,Sketch,Part Design,Windows,Help"></menu-bar>
      <tool-bar><tool-grip first></tool-grip>${tools('new open save : undo redo | refresh : workbench : fit fit-sel iso+ view-sel | draw-style+ select-mode+ sync+ measure')}</tool-bar>
      <tool-bar><tool-grip first></tool-grip>${tools('part group link+ varset : whatsthis : body sketch+ validate check binder clone datum+')}</tool-bar>
      <tool-bar><tool-grip first></tool-grip>${tools('pad revolution loft pipe helix primitive+ | pocket hole groove sub-loft sub-pipe sub-helix sub-primitive+ | boolean : fillet chamfer draft thickness : mirror linear polar multi')}</tool-bar>
      <main>
        <task-panel></task-panel>
        <div class="docs">
          <model-view></model-view>
          <div class="tabs">
            <document-tab icon="freecad">Start</document-tab>
            <document-tab icon="document" active>Unnamed : 1*</document-tab>
          </div>
        </div>
      </main>
      <status-bar>Preselected: Unnamed.Body.Fillet001.Face5 (24.32 mm, -19.74 mm, 10.00 mm)</status-bar>
      <task-bar></task-bar>
    `);
  }
}

customElements.define('cad-icon', CadIcon);
customElements.define('title-bar', TitleBar);
customElements.define('menu-bar', MenuBar);
customElements.define('tool-bar', ToolBar);
customElements.define('tool-grip', ToolGrip);
customElements.define('tool-separator', ToolSeparator);
customElements.define('tool-button', ToolButton);
customElements.define('combo-box', ComboBox);
customElements.define('task-panel', TaskPanel);
customElements.define('model-view', ModelView);
customElements.define('document-tab', DocumentTab);
customElements.define('status-bar', StatusBar);
customElements.define('taskbar-app', TaskbarApp);
customElements.define('task-bar', TaskBar);
customElements.define('cad-app', CadApp);
</script>
</body>
</html>
